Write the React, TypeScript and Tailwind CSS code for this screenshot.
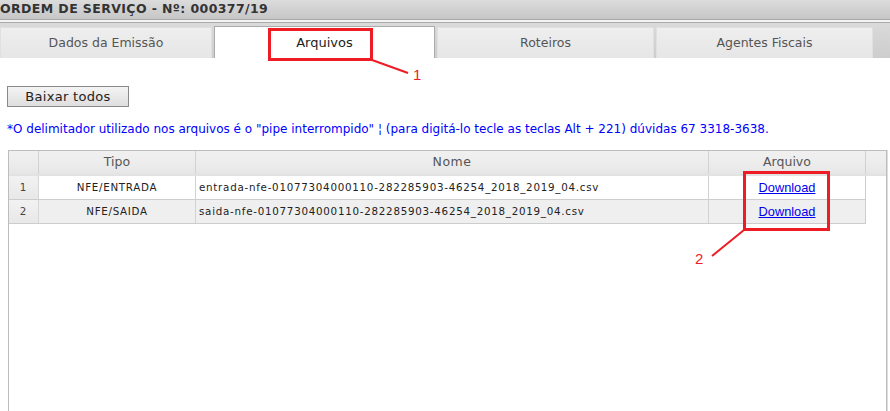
export default function App() {
  const rows = [
    { n: 1, tipo: "NFE/ENTRADA", nome: "entrada-nfe-01077304000110-282285903-46254_2018_2019_04.csv" },
    { n: 2, tipo: "NFE/SAIDA", nome: "saida-nfe-01077304000110-282285903-46254_2018_2019_04.csv" },
  ]
  const tabs = ["Dados da Emissão", "Arquivos", "Roteiros", "Agentes Fiscais"]

  return (
    <div className="relative w-[890px] h-[411px] overflow-hidden bg-white font-['DejaVu_Sans',sans-serif]">
      {/* Title bar */}
      <div className="h-[20px] bg-gradient-to-b from-[#dcdcdc] to-[#c6c6c6] border-b border-[#a9a9a9] flex items-center">
        <span className="text-[12.5px] font-bold text-[#333] tracking-[0.4px] leading-none">
          ORDEM DE SERVIÇO - Nº: 000377/19
        </span>
      </div>
      <div className="h-[2px] bg-[#f4f4f4]" />

      {/* Tabs */}
      <div className="h-[36px] border-t border-[#aaaaaa] bg-gradient-to-b from-[#dadada] to-[#cdcdcd] flex items-end gap-[2px] pr-[17px]">
        {tabs.map((t, i) =>
          i === 1 ? (
            <div
              key={t}
              className="h-[32px] w-[221px] bg-white border-l border-t border-r border-[#ababab] flex items-center justify-center text-[13px] text-[#222]"
            >
              {t}
            </div>
          ) : (
            <div
              key={t}
              className={`h-[31px] ${i === 0 ? "w-[212px]" : "w-[217px]"} bg-gradient-to-b from-[#eeeeee] to-[#e6e6e6] border-t border-l border-r border-[#e0e0e0] flex items-center justify-center text-[12.5px] text-[#555]`}
            >
              {t}
            </div>
          )
        )}
      </div>

      {/* Content */}
      <div className="pt-[26px] px-[7px]">
        <button className="w-[122px] h-[21px] border border-[#8a8a8a] bg-gradient-to-b from-[#f4f4f4] to-[#dedede] text-[13px] text-[#222] leading-none tracking-[0.3px]">
          Baixar todos
        </button>
        <p className="mt-[13px] text-[12px] leading-[16px] text-[#0000ff] whitespace-nowrap">
          *O delimitador utilizado nos arquivos é o "pipe interrompido" ¦ (para digitá-lo tecle as teclas Alt + 221) dúvidas 67 3318-3638.
        </p>

        {/* Grid */}
        <div className="mt-[13px] ml-[1px] w-[879px] h-[300px] border border-[#bdbdbd] shadow-[1px_0_0_#dddddd]">
          <div className="grid grid-cols-[30px_157px_513px_157px_1fr] h-[25px] bg-gradient-to-b from-[#f0f0f0] via-[#ededed] to-[#e6e6e6] border-b-2 border-[#e2e2e2] text-[12.5px] text-[#555]">
            <div className="border-r border-[#d2d2d2]" />
            <div className="border-r border-[#d2d2d2] flex items-center justify-center">Tipo</div>
            <div className="border-r border-[#d2d2d2] flex items-center justify-center tracking-[0.5px]">Nome</div>
            <div className="border-r border-[#d2d2d2] flex items-center justify-center">Arquivo</div>
            <div />
          </div>
          {rows.map((r) => (
            <div
              key={r.n}
              className={`grid grid-cols-[30px_157px_513px_157px] w-[857px] h-[24px] border-b border-[#cdcdcd] text-[10.3px] text-[#222] tracking-[0.7px] ${r.n === 2 ? "bg-[#efefef]" : "bg-white"}`}
            >
              <div className="border-r border-[#d6d6d6] bg-gradient-to-b from-[#f2f2f2] to-[#e8e8e8] flex items-center justify-center text-[#444]">
                {r.n}
              </div>
              <div className="border-r border-[#d2d2d2] flex items-center justify-center">{r.tipo}</div>
              <div className="border-r border-[#d2d2d2] flex items-center pl-[3px] tracking-[0.74px]">{r.nome}</div>
              <div className="border-r border-[#cdcdcd] flex items-center justify-center">
                <a href="#" className="text-[12.8px] text-[#0000ee] underline tracking-normal font-['Liberation_Sans',sans-serif]">
                  Download
                </a>
              </div>
            </div>
          ))}
        </div>
      </div>

      {/* Annotation 1 */}
      <div className="absolute left-[268px] top-[28px] w-[105px] h-[33px] border-[3px] border-[#ee1c25]" />
      <svg className="absolute left-0 top-0 pointer-events-none" width="890" height="411">
        <line x1="372" y1="60" x2="408" y2="73" stroke="#ee1c25" strokeWidth="2" />
        <line x1="744" y1="230" x2="712" y2="256" stroke="#ee1c25" strokeWidth="2" />
      </svg>
      <span className="absolute left-[413px] top-[67px] text-[15px] leading-none text-[#ee1c25] font-['Liberation_Sans_Narrow','Liberation_Sans',sans-serif]">
        1
      </span>

      {/* Annotation 2 */}
      <div className="absolute left-[743px] top-[171px] w-[87px] h-[60px] border-[3px] border-[#ee1c25]" />
      <span className="absolute left-[695px] top-[251px] text-[15px] leading-none text-[#ee1c25] font-['Liberation_Sans_Narrow','Liberation_Sans',sans-serif]">
        2
      </span>
    </div>
  )
}
